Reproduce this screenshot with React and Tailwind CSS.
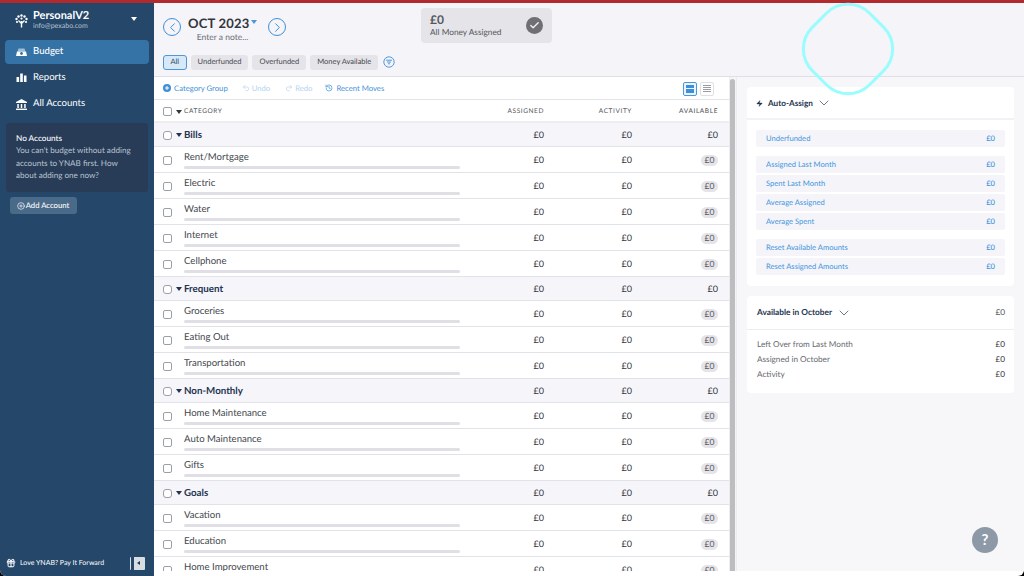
import React from "react";
import { ChevronLeft, ChevronRight, ChevronDown, PlusCircle, Undo2, Redo2, History, Check, Zap, Gift } from "lucide-react";

const groups = [
  { name: "Bills", items: ["Rent/Mortgage", "Electric", "Water", "Internet", "Cellphone"] },
  { name: "Frequent", items: ["Groceries", "Eating Out", "Transportation"] },
  { name: "Non-Monthly", items: ["Home Maintenance", "Auto Maintenance", "Gifts"] },
  { name: "Goals", items: ["Vacation", "Education", "Home Improvement"] },
];

const rowGrid = "grid grid-cols-[30px_276px_84px_88px_86px] items-center shrink-0";

function Box({ className = "" }) {
  return <span className={"block w-[9px] h-[9px] rounded-[2px] border border-[#9aa0a8] bg-white " + className} />;
}

function Tri({ className = "" }) {
  return <span className={"inline-block w-0 h-0 border-l-[3px] border-r-[3px] border-t-[4px] border-l-transparent border-r-transparent " + className} />;
}

function NavItem({ icon, label, active }) {
  return (
    <div className={"mx-[5px] h-[24px] rounded-[4px] flex items-center pl-[11px] gap-[6px] text-[9.6px] text-white " + (active ? "bg-[#3573a7] font-medium" : "")}>
      <span className="w-[11px] flex justify-center">{icon}</span>
      {label}
    </div>
  );
}

function Tab({ label, active }) {
  return (
    <span className={"h-[15px] flex items-center rounded-[3px] text-[7.5px] " + (active ? "px-[6.5px] bg-[#d7e8f6] border border-[#4c97d8] text-[#24476a]" : "px-[7px] bg-[#e4e4e9] text-[#44474d]")}>
      {label}
    </span>
  );
}

function SideRow({ label, className = "" }) {
  return (
    <div className={"h-[17px] pt-[1px] rounded-[2px] bg-[#f4f4f9] flex items-center justify-between px-[10px] text-[7.6px] text-[#3f94e0] " + className}>
      <span>{label}</span>
      <span className="font-medium">£0</span>
    </div>
  );
}

function Category({ name }) {
  return (
    <div className={rowGrid + " h-[26px] border-b border-[#e2e3e8] bg-white text-[9px] text-[#33363c]"}>
      <span className="pl-[9px] pt-[2px]"><Box /></span>
      <div className="flex flex-col">
        <span className="text-[9.6px] leading-[12px] text-[#44474d] mb-[2px] mt-[2px]">{name}</span>
        <span className="block h-[2.5px] rounded-full bg-[#dfdfe5]" />
      </div>
      <span className="text-right pt-[1px]">£0</span>
      <span className="text-right pt-[1px]">£0</span>
      <span className="flex justify-end pt-[1px]">
        <span className="h-[11px] w-[17px] rounded-full bg-[#e4e4e9] text-[#55585e] flex items-center justify-center text-[8.5px]">£0</span>
      </span>
    </div>
  );
}

function Group({ g }) {
  return (
    <>
      <div className={rowGrid + " h-[24px] pt-[1px] bg-[#f5f5fa] border-b border-[#e2e3e8] text-[9px] text-[#33363c]"}>
        <span className="pl-[9px]"><Box className="rounded-[3px]" /></span>
        <span className="col-start-2 -ml-[8px] flex items-center gap-[2px] text-[9.75px] font-bold text-[#24344f]">
          <Tri className="border-t-[#24344f]" />
          {g.name}
        </span>
        <span className="text-right">£0</span>
        <span className="text-right">£0</span>
        <span className="text-right">£0</span>
      </div>
      {g.items.map((n) => <Category key={n} name={n} />)}
    </>
  );
}

export default function App() {
  return (
    <div className="w-[1024px] h-[576px] bg-black">
      <div className="relative w-[1024px] h-[576px] rounded-b-[6px] overflow-hidden bg-white flex flex-col font-['Lato','Noto_Sans',sans-serif] [text-rendering:geometricPrecision]">
        <div className="h-[3px] bg-[#b12a2d] shrink-0" />
        <div className="flex flex-1 min-h-0">
          <aside className="w-[154px] shrink-0 bg-[#24476a] flex flex-col text-white">
            <div className="h-[37px] shrink-0 flex items-center pl-[15px] pr-[15px] pb-[2px]">
              <svg width="13" height="14" viewBox="0 0 13 14" className="mr-[5px]" fill="none" stroke="#fff">
                <path d="M6.5 13.5V7M6.5 9.5 3.5 6.5M6.5 9.5l3-3" strokeWidth="1.4" />
                <g fill="#fff" stroke="none">
                  <circle cx="6.5" cy="1.5" r="1.2" /><circle cx="3.5" cy="2.5" r="1.2" /><circle cx="9.5" cy="2.5" r="1.2" />
                  <circle cx="1.5" cy="5" r="1.2" /><circle cx="11.5" cy="5" r="1.2" /><circle cx="6.5" cy="4.6" r="1.1" />
                  <circle cx="2" cy="8" r="1.1" /><circle cx="11" cy="8" r="1.1" />
                </g>
              </svg>
              <div className="flex flex-col flex-1 -mt-[1px]">
                <span className="text-[11px] leading-[13px] font-bold">PersonalV2</span>
                <span className="text-[7px] leading-[9px] text-[#b6c3d1]">info@pexabo.com</span>
              </div>
              <Tri className="border-l-[3.5px] border-r-[3.5px] border-t-[4.5px] border-t-white mr-[2px] -mt-[3px]" />
            </div>
            <div className="flex flex-col gap-[2px]">
              <NavItem active label="Budget" icon={
                <svg width="11" height="10" viewBox="0 0 11 10"><path d="M2.5 1.5h6l1 3H1.5z" fill="#9fbcd6" /><path d="M1 4.5h9l1 4.5H0z" fill="#fff" /><circle cx="5.5" cy="6.5" r="1.4" fill="#3573a7" /></svg>
              } />
              <NavItem label="Reports" icon={
                <svg width="11" height="10" viewBox="0 0 11 10" fill="#fff"><rect x="0.5" y="4" width="2.6" height="5" /><rect x="4.2" y="0.5" width="2.6" height="8.5" /><rect x="7.9" y="2.5" width="2.6" height="6.5" /></svg>
              } />
              <NavItem label="All Accounts" icon={
                <svg width="11" height="11" viewBox="0 0 11 11" fill="#fff"><path d="M5.5 0 11 3v1H0V3z" /><rect x="1.3" y="5" width="1.5" height="4" /><rect x="4.75" y="5" width="1.5" height="4" /><rect x="8.2" y="5" width="1.5" height="4" /><rect x="0" y="9.6" width="11" height="1.4" /></svg>
              } />
            </div>
            <div className="mx-[6px] mt-[7px] h-[69px] shrink-0 rounded-[3px] bg-[#283c58] px-[10px] pt-[9px]">
              <div className="text-[8.2px] leading-[12px] font-medium">No Accounts</div>
              <p className="text-[8.1px] leading-[12.5px] text-[#b9c4d0]">You can't budget without adding accounts to YNAB first. How about adding one now?</p>
            </div>
            <div className="ml-[9.5px] mt-[5px] w-[67px] h-[17px] shrink-0 rounded-[3px] bg-[#4a6a89] flex items-center justify-center gap-[1px] text-[7.7px] font-medium">
              <PlusCircle size={8} strokeWidth={2} />
              Add Account
            </div>
            <div className="mt-auto h-[26px] shrink-0 flex items-center pl-[6px] pr-[9px] text-[7px]">
              <Gift size={10} strokeWidth={2.4} className="mr-[4px]" />
              <span className="flex-1">Love YNAB? Pay It Forward</span>
              <span className="w-[15px] h-[13px] rounded-[1px] bg-[#d8dde3] flex items-center">
                <span className="w-[3px] h-full bg-[#24476a] ml-[1px]" />
                <span className="ml-[3px] w-0 h-0 border-y-[2.5px] border-r-[3.5px] border-y-transparent border-r-[#24344f]" />
              </span>
            </div>
          </aside>

          <main className="flex-1 min-w-0 flex flex-col h-[568px]">
            <header className="h-[74px] shrink-0 bg-[#f4f4f9] border-b border-[#dfdfe5] pl-[9px] flex flex-col">
              <div className="flex h-[40px] shrink-0">
                <div className="flex items-start pt-[15px] w-[258px]">
                  <span className="w-[18px] h-[18px] rounded-full border-[1.5px] border-[#3f8fd8] flex items-center justify-center text-[#3f8fd8]"><ChevronLeft size={15} strokeWidth={1.6} /></span>
                  <div className="flex flex-col items-center ml-[7px] -mt-[3px] w-[69px] shrink-0">
                    <span className="flex items-center self-start whitespace-nowrap text-[13px] leading-[16px] font-bold text-[#33363c] tracking-[0.2px]">OCT 2023<Tri className="ml-[2px] -mt-[2px] border-l-[3px] border-r-[3px] border-t-[3.5px] border-t-[#4c97d8]" /></span>
                    <span className="text-[8.5px] leading-[10px] mt-[1px] text-[#6b6e74] whitespace-nowrap">Enter a note...</span>
                  </div>
                  <span className="ml-[11px] w-[18px] h-[18px] rounded-full border-[1.5px] border-[#3f8fd8] flex items-center justify-center text-[#3f8fd8]"><ChevronRight size={15} strokeWidth={1.6} /></span>
                </div>
                <div className="mt-[5px] w-[131px] h-[35px] rounded-[4px] bg-[#e4e4e9] flex items-center justify-between pl-[9px] pr-[9px]">
                  <div className="flex flex-col">
                    <span className="text-[12px] leading-[14px] font-bold text-[#55585e]">£0</span>
                    <span className="text-[8.3px] leading-[11px] text-[#55585e]">All Money Assigned</span>
                  </div>
                  <span className="w-[17px] h-[17px] rounded-full bg-[#6f7074] flex items-center justify-center text-[#f0f0f2]"><Check size={11} strokeWidth={3} /></span>
                </div>
              </div>
              <div className="flex items-center gap-[4px] mt-[11.5px]">
                <Tab active label="All" />
                <Tab label="Underfunded" />
                <Tab label="Overfunded" />
                <Tab label="Money Available" />
                <svg width="12" height="12" viewBox="0 0 12 12" fill="none" stroke="#3f8fd8" strokeWidth="0.9" className="ml-[1px]">
                  <circle cx="6" cy="6" r="5.2" /><path d="M3 4.2h6M4 6h4M5 7.8h2" />
                </svg>
              </div>
            </header>

            <div className="flex flex-1 min-h-0">
              <div className="w-[575px] shrink-0 flex flex-col min-h-0 overflow-hidden bg-white">
                <div className="h-[23px] shrink-0 pt-[1px] border-b border-[#e2e3e8] flex items-center pl-[9px] pr-[16px] text-[7.7px] text-[#3f8fd8]">
                  <span className="flex items-center gap-[3px]">
                    <svg width="8" height="8" viewBox="0 0 8 8"><circle cx="4" cy="4" r="4" fill="#3f8fd8" /><path d="M4 2v4M2 4h4" stroke="#fff" /></svg>
                    Category Group
                  </span>
                  <span className="flex items-center gap-[2px] ml-[14px] text-[#b3d4ef]"><Undo2 size={8} />Undo</span>
                  <span className="flex items-center gap-[2px] ml-[15px] text-[#b3d4ef]"><Redo2 size={8} />Redo</span>
                  <span className="flex items-center gap-[3px] ml-[13px]"><History size={8} />Recent Moves</span>
                  <span className="ml-auto flex gap-[3px] mr-[-1px]">
                    <span className="w-[14px] h-[14px] rounded-[2px] border border-[#4c97d8] bg-[#eaf3fb] flex flex-col items-center justify-center gap-[1px]">
                      <span className="w-[8px] h-[3.5px] bg-[#3f8fd8]" /><span className="w-[8px] h-[3.5px] bg-[#3f8fd8]" />
                    </span>
                    <span className="w-[14px] h-[14px] rounded-[2px] border border-[#dfdfe5] flex flex-col items-center justify-center gap-[1px]">
                      <span className="w-[8px] h-[1px] bg-[#9a9da3]" /><span className="w-[8px] h-[1px] bg-[#9a9da3]" /><span className="w-[8px] h-[1px] bg-[#9a9da3]" /><span className="w-[8px] h-[1px] bg-[#9a9da3]" />
                    </span>
                  </span>
                </div>
                <div className={rowGrid + " h-[23px] pt-[1px] border-b-[2px] border-[#eeeef2] text-[6.5px] tracking-[0.6px] text-[#55585e]"}>
                  <span className="pl-[9px]"><Box /></span>
                  <span className="-ml-[8px] pt-[1px] flex items-center gap-[2px]"><Tri className="border-t-[#33363c]" />CATEGORY</span>
                  <span className="text-right pt-[1px]">ASSIGNED</span>
                  <span className="text-right pt-[1px]">ACTIVITY</span>
                  <span className="text-right pt-[1px] font-medium">AVAILABLE</span>
                </div>
                {groups.map((g) => <Group key={g.name} g={g} />)}
              </div>
              <div className="w-[8px] shrink-0 bg-[#f4f4f7] border-l border-r border-[#ececf0] flex justify-start pt-[2px]">
                <span className="block w-[5px] h-full rounded-t-full bg-[#bdbdbf]" />
              </div>
              <aside className="flex-1 min-w-0 bg-[#f7f7fa] pt-[10px] px-[10px] relative">
                <section className="bg-white rounded-[4px] mb-[10px]">
                  <div className="h-[33px] border-b-[2px] border-[#f2f2f6] flex items-center pl-[9px] pt-[1px] gap-[3px] text-[8.2px] font-bold text-[#24344f]">
                    <Zap size={7} fill="#24344f" strokeWidth={1} />
                    <span className="ml-[2px]">Auto-Assign</span>
                    <ChevronDown size={16} strokeWidth={1} />
                  </div>
                  <div className="px-[9px] pt-[10px] pb-[11px] flex flex-col gap-[2px]">
                    <SideRow label="Underfunded" className="mb-[7px]" />
                    <SideRow label="Assigned Last Month" />
                    <SideRow label="Spent Last Month" />
                    <SideRow label="Average Assigned" />
                    <SideRow label="Average Spent" className="mb-[7px]" />
                    <SideRow label="Reset Available Amounts" />
                    <SideRow label="Reset Assigned Amounts" />
                  </div>
                </section>
                <section className="bg-white rounded-[4px]">
                  <div className="h-[34px] border-b border-[#ececf1] flex items-center pl-[10px] pr-[9px] text-[8.3px] font-bold text-[#24344f]">
                    <span>Available in October</span>
                    <ChevronDown size={16} strokeWidth={1} className="ml-[4px]" />
                    <span className="ml-auto font-normal text-[#55585e]">£0</span>
                  </div>
                  <div className="px-[10px] pr-[9px] pt-[7px] pb-[11px] text-[8.2px] leading-[15px] text-[#66696f]">
                    <div className="flex justify-between"><span>Left Over from Last Month</span><span className="text-[#33363c]">£0</span></div>
                    <div className="flex justify-between"><span>Assigned in October</span><span className="text-[#33363c]">£0</span></div>
                    <div className="flex justify-between"><span>Activity</span><span className="text-[#33363c]">£0</span></div>
                  </div>
                </section>
                <span className="absolute right-[26px] bottom-[18px] w-[26px] h-[26px] rounded-full bg-[#8d99a6] flex items-center justify-center text-white text-[15px] font-bold">?</span>
              </aside>
            </div>
          </main>
        </div>
        <div className="absolute left-[806px] top-[7px] w-[84px] h-[84px] rotate-45 rounded-[32px] border-[3px] border-[#99fdff] pointer-events-none" />
      </div>
    </div>
  );
}
